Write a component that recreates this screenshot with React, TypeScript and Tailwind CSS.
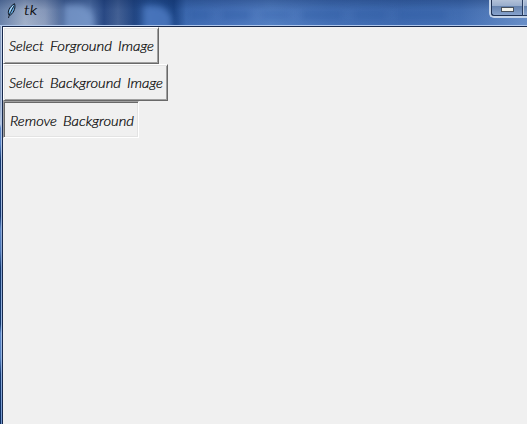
import React from "react";

function Backdrop() {
  return (
    <div className="absolute inset-0 overflow-hidden bg-[linear-gradient(90deg,#6a83ab_0px,#a3b2cb_25px,#8e9fbf_45px,#4c689a_64px,#5776ab_90px,#2a4a85_104px,#456296_118px,#234784_134px,#2a5699_150px,#1c4586_174px,#3e6bb2_186px,#4974bb_230px,#5480c4_270px,#4571b7_330px,#3f6bb1_400px,#4470b5_460px,#6a90c9_527px)]">
      <div className="absolute inset-0 bg-[linear-gradient(180deg,rgba(10,38,90,0.35),rgba(20,50,105,0.08)_40%,transparent)]" />
      <div className="absolute left-[64px] top-[5px] h-7 w-[30px] rounded-tr-[16px] bg-[#7fa0d2] opacity-70 blur-[3px]" />
      <div className="absolute left-[143px] top-[6px] h-7 w-[29px] rounded-tr-[16px] bg-[#4f7cc4] opacity-80 blur-[3px]" />
      <div className="absolute left-[190px] top-[11px] flex gap-3 blur-[3px]">
        <span className="h-2 w-5 bg-[#305da6] opacity-50" />
        <span className="h-2 w-7 bg-[#305da6] opacity-50" />
        <span className="h-2 w-7 bg-[#3765ad] opacity-40" />
        <span className="h-2 w-10 bg-[#305da6] opacity-50" />
        <span className="h-2 w-8 bg-[#305da6] opacity-50" />
        <span className="h-2 w-12 bg-[#305da6] opacity-50" />
      </div>
    </div>
  );
}

function Feather() {
  return (
    <svg className="h-4 w-3" viewBox="0 0 12 16">
      <path d="M3 12C1.2 9 3 4 8.5 0.7C9.7 4 8.5 9 4.5 12Z" fill="#5fa5dc" stroke="#101722" strokeWidth="1" />
      <path d="M4 9C4 7 6 4 7 3" fill="none" stroke="#c5e8ff" strokeWidth="1" />
      <path d="M2.5 15C3 12 5 8 8 3" fill="none" stroke="#10151f" strokeWidth="0.9" />
    </svg>
  );
}

type Word = { text: string; x: number; width: number };

function Label({ words, width }: { words: Word[]; width: number }) {
  return (
    <svg className="block h-6 shrink-0 overflow-visible" width={width} height="24">
      {words.map((word) => (
        <text
          key={word.text}
          x={word.x}
          y="17"
          textLength={word.width}
          lengthAdjust="spacingAndGlyphs"
          className="fill-black stroke-black stroke-[0.2px] font-['Segoe_Print','Lato',sans-serif] text-[13.5px] font-light italic"
        >
          {word.text}
        </text>
      ))}
    </svg>
  );
}

const raised = "border-t-[#ffffff] border-l-[#ffffff] border-r-[#696969] border-b-[#696969] shadow-[inset_1px_1px_#e3e3e3,inset_-1px_-1px_#a0a0a0]";
const sunken = "border-t-[#a0a0a0] border-l-[#a0a0a0] border-r-[#ffffff] border-b-[#ffffff] shadow-[inset_1px_1px_#696969,inset_-1px_-1px_#e3e3e3]";

export default function App() {
  return (
    <div className="flex h-[424px] w-[527px] flex-col overflow-hidden bg-[#f0f0f0]">
      <header className="relative h-[26px] shrink-0 border-b border-[#aec6eb]">
        <Backdrop />
        <div className="relative flex h-full items-start justify-between pl-[6px]">
          <div className="flex items-start gap-[6px] pt-[3px]">
            <Feather />
            <div className="-mt-[5px]">
              <Label words={[{ text: "tk", x: 0, width: 13 }]} width={13} />
            </div>
          </div>
          <div className="flex h-[18px] w-[38px] rounded-bl-[5px] border-b-2 border-l-2 border-[#c2d2e8]">
            <div className="flex h-4 w-[31px] items-center justify-center rounded-bl-[3px] border-b border-l border-[#1f3151] bg-[linear-gradient(#b2c1d8_0%,#99aecd_38%,#6582ad_40%,#86a2cd_100%)] pt-[3px]">
              <div className="h-[5px] w-[13px] border border-[#48515d] bg-[#f3f3ec]" />
            </div>
            <div className="h-4 flex-1 border-b border-l border-[#263a5e] bg-[linear-gradient(#b2c1d8_0%,#99aecd_38%,#6582ad_40%,#86a2cd_100%)] shadow-[inset_1px_0_#bdcce1]" />
          </div>
        </div>
      </header>
      <div className="flex min-h-0 flex-1">
        <div className="w-px bg-[linear-gradient(180deg,#8b9fc1_0px,#8297bb_70px,#b5c5df_98px,#5c88cb_102px,#5380c4_118px,#13376e_134px,#14366f_190px,#5782c3_203px,#4a74b5_225px,#13376e_242px,#12376e_298px,#5682c5_307px,#517dbd_332px,#143973_348px,#0c2d62_398px)]" />
        <div className="w-px bg-[linear-gradient(180deg,#c4d4ea_0px,#a5bce0_165px,#7f9fcf_245px,#a1bee6_310px,#7195cb_398px)]" />
        <main className="flex flex-1 flex-col items-start border-l border-t border-[#18294c] bg-[#f0f0f0]">
          <div className={`flex h-[37px] w-[156px] items-center border pl-[5px] ${raised}`}>
            <Label
              words={[
                { text: "Select", x: 0, width: 35 },
                { text: "Forground", x: 41, width: 62 },
                { text: "Image", x: 109, width: 36 },
              ]}
              width={144}
            />
          </div>
          <div className={`flex h-[37px] w-[165px] items-center border pl-[5px] ${raised}`}>
            <Label
              words={[
                { text: "Select", x: 0, width: 35 },
                { text: "Background", x: 41, width: 71 },
                { text: "Image", x: 118, width: 36 },
              ]}
              width={153}
            />
          </div>
          <div className={`flex h-[37px] w-[136px] items-center border pl-[6px] pt-[2px] ${sunken}`}>
            <Label
              words={[
                { text: "Remove", x: 0, width: 47 },
                { text: "Background", x: 53, width: 71 },
              ]}
              width={124}
            />
          </div>
        </main>
      </div>
    </div>
  );
}
